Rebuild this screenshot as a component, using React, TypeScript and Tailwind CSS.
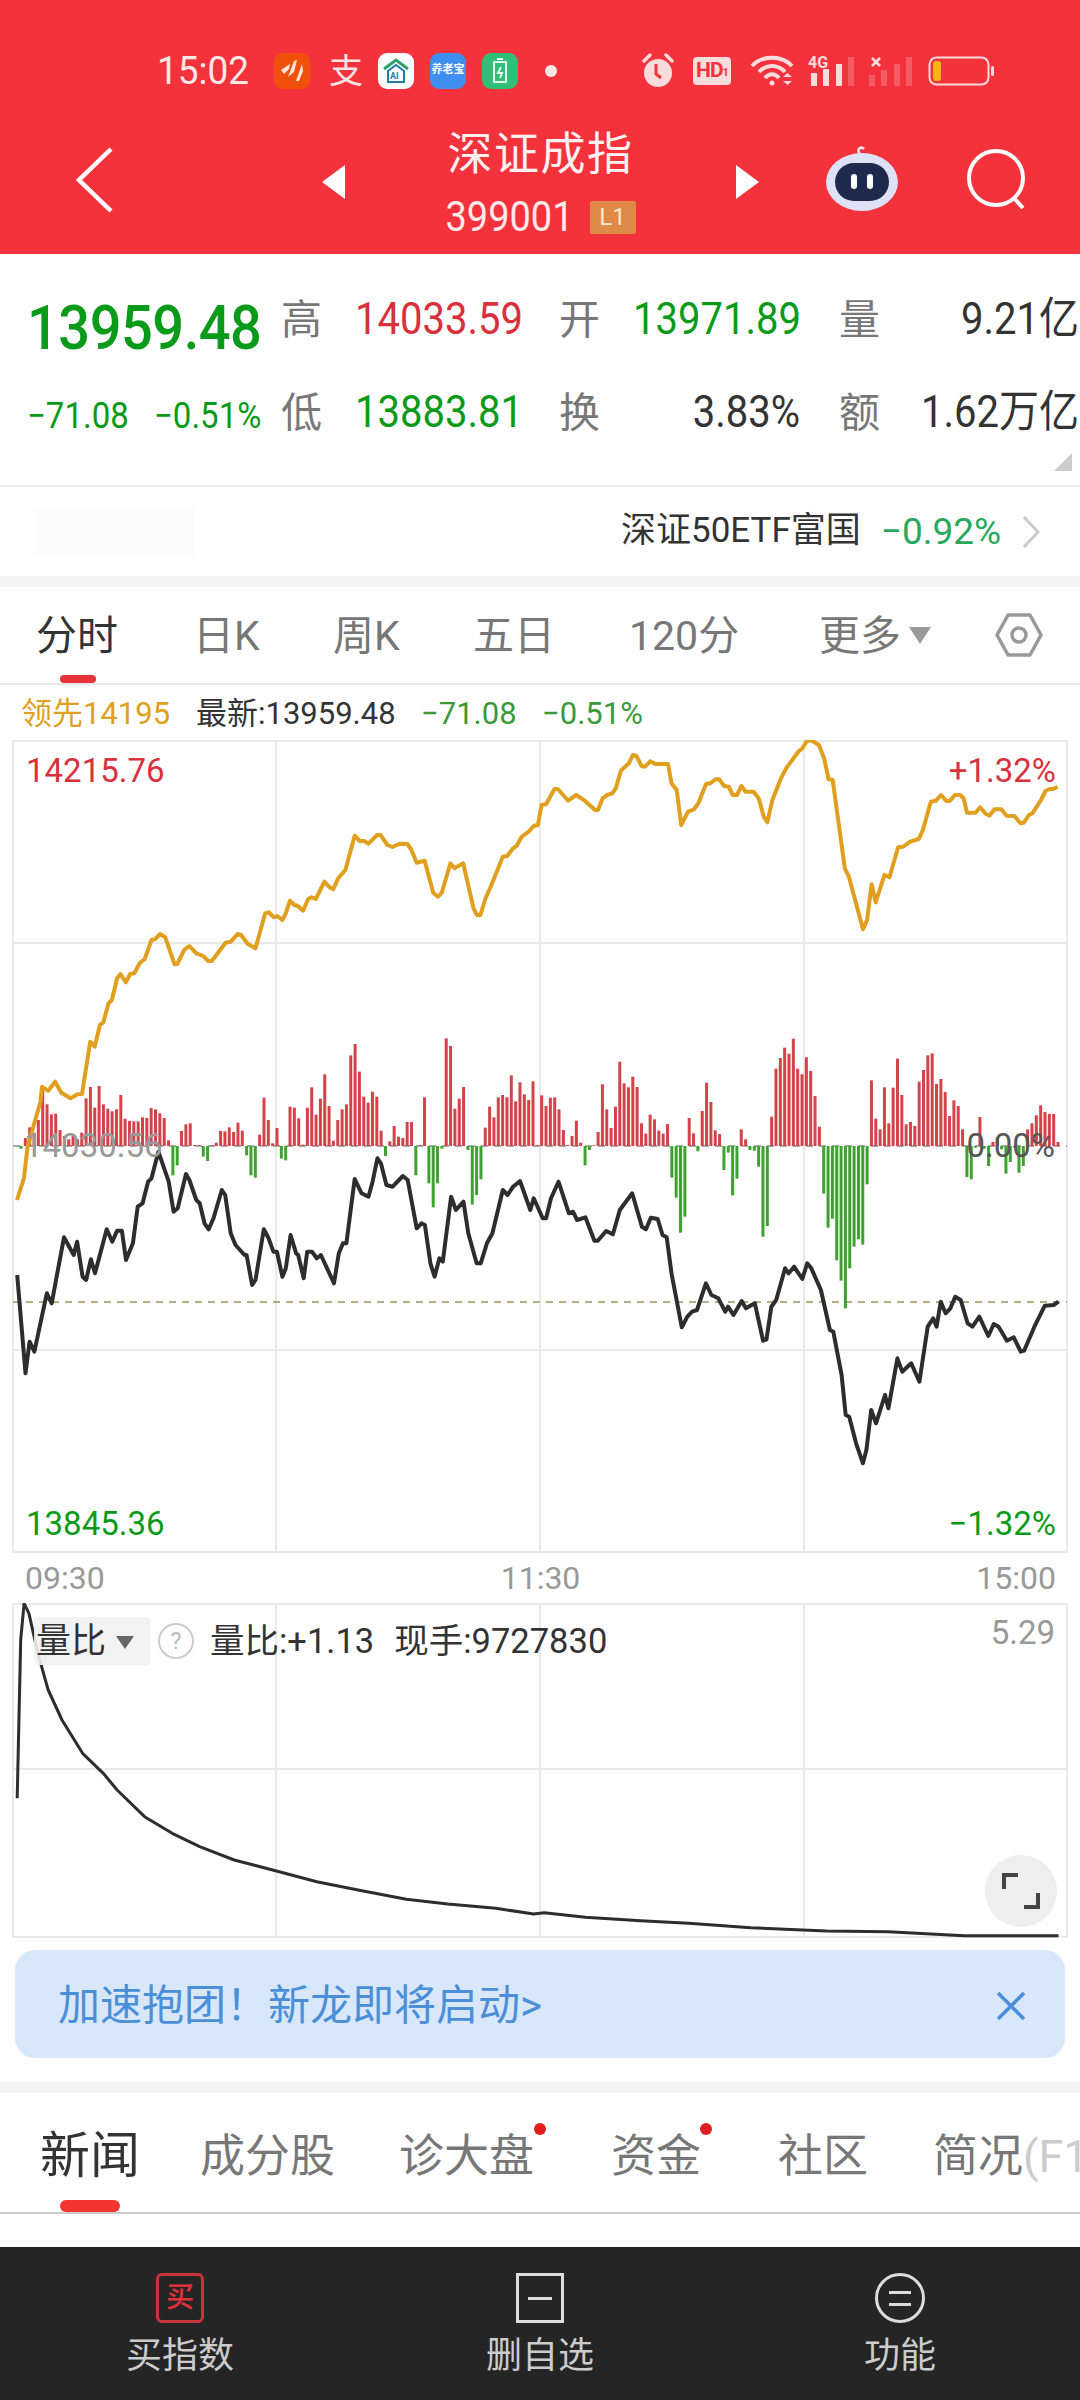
import React from 'react';

const FONT = "font-['Roboto','Noto_Sans_CJK_SC',sans-serif]";

// traced points, in zoomed crop coordinates
const goldLeft = [[118,1200],[122,1160],[140,1172],[160,1145],[178,1178],[205,1195],[225,1183],[238,1182],[262,1025],[275,1040],[290,975],[300,968],[315,910],[325,900],[340,835],[350,822],[365,847],[378,822],[390,820],[405,790],[420,778],[440,720],[450,718],[465,702],[480,712],[507,793],[515,792],[535,750],[550,738],[570,760],[590,768],[605,783],[615,783],[655,728],[670,725],[690,702],[700,705],[720,732],[742,745],[770,640],[780,637],[795,652],[805,648],[820,660],[830,640],[842,602],[855,615],[865,618],[880,632],[895,597],[905,592],[917,597],[942,545],[955,560],[968,568],[982,535],[1003,510],[1030,407],[1045,423],[1058,423],[1070,431],[1095,405],[1105,405],[1125,435],[1140,441],[1160,431],[1183,432],[1195,450],[1210,488],[1233,482],[1258,578],[1272,590],[1283,578],[1308,490],[1320,505],[1345,490],[1375,625],[1385,645],[1395,645],[1410,595],[1425,560],[1460,470],[1473,468],[1490,445],[1500,438],[1515,410],[1535,395],[1550,378],[1562,375]];
const goldRight = [[0,340],[5,315],[18,312],[42,267],[52,267],[82,302],[105,285],[130,302],[160,330],[168,330],[182,295],[195,285],[210,280],[220,265],[235,212],[258,190],[270,165],[280,168],[295,198],[305,200],[320,184],[335,192],[372,192],[382,250],[397,270],[410,375],[430,335],[447,328],[460,310],[482,252],[495,250],[510,238],[520,238],[535,258],[548,260],[560,285],[572,285],[585,258],[597,275],[620,275],[635,295],[650,350],[660,367],[675,300],[700,235],[715,205],[750,155],[762,145],[775,122],[790,122],[810,135],[825,175],[838,238],[850,240],[885,505],[897,530],[938,688],[950,660],[963,553],[975,607],[1000,525],[1015,532],[1040,442],[1055,440],[1075,425],[1100,417],[1112,390],[1135,305],[1150,302],[1165,285],[1180,303],[1190,303],[1205,285],[1220,285],[1230,295],[1240,338],[1265,338],[1278,322],[1295,342],[1305,347],[1320,328],[1340,328],[1355,347],[1378,348],[1395,370],[1405,368],[1420,345],[1430,340],[1455,300],[1468,273],[1480,267],[1490,267],[1503,260]];
const blackLine = [[25,525],[37,820],[43,725],[50,755],[68,580],[75,610],[93,412],[107,465],[112,425],[120,530],[125,540],[132,478],[138,520],[155,388],[163,425],[170,392],[177,392],[183,480],[193,430],[200,320],[207,310],[215,245],[220,235],[230,155],[245,245],[252,335],[258,325],[270,222],[275,240],[285,300],[290,310],[297,370],[303,388],[310,355],[322,270],[327,285],[335,400],[342,435],[355,465],[358,465],[366,555],[371,540],[383,388],[390,415],[397,455],[402,455],[410,530],[415,505],[422,405],[430,460],[433,465],[441,535],[446,455],[453,455],[460,475],[466,465],[485,550],[492,460],[498,430],[503,430],[515,237],[525,280],[535,290],[541,245],[548,175],[553,190],[561,255],[570,260],[585,228],[592,240],[605,385],[612,370],[617,375],[625,490],[631,530],[638,475],[643,485],[655,290],[662,330],[673,305],[680,400],[692,490],[698,490],[707,430],[715,400],[730,270],[737,285],[745,260],[755,243],[770,330],[775,295],[788,355],[793,355],[800,295],[811,245],[826,340],[832,335],[838,360],[850,352],[863,422],[868,422],[880,393],[890,403],[900,330],[918,280],[932,380],[938,388],[945,353],[955,357],[962,405],[968,412],[975,520],[990,682],[998,650],[1005,635],[1012,630],[1025,550],[1033,585],[1043,595],[1053,635],[1057,620],[1065,645],[1077,603],[1083,625],[1096,610],[1108,722],[1113,718],[1120,620],[1127,600],[1140,505],[1145,520],[1153,500],[1165,537],[1172,490],[1178,505],[1192,570],[1205,690],[1210,695],[1222,825],[1228,945],[1233,950],[1243,1030],[1253,1090],[1258,1050],[1265,930],[1272,970],[1285,885],[1290,925],[1303,775],[1310,815],[1323,790],[1335,845],[1347,680],[1355,655],[1360,680],[1366,605],[1373,640],[1380,625],[1387,590],[1395,600],[1405,670],[1412,680],[1422,650],[1435,708],[1443,672],[1450,680],[1462,722],[1472,712],[1482,755],[1487,752],[1502,680],[1517,617],[1530,615],[1537,605]];
const ratioLine = [[25,655],[30,180],[35,70],[42,100],[55,220],[70,330],[90,420],[120,520],[150,580],[170,630],[210,710],[250,760],[290,800],[340,840],[400,872],[460,905],[520,930],[590,958],[650,972],[720,985],[775,1002],[790,998],[850,1012],[930,1022],[1000,1030],[1090,1043],[1200,1053],[1290,1055],[1400,1067],[1537,1067]];
const bars = [-8,24,56,40,78,175,125,95,97,48,30,20,30,20,40,143,177,115,180,125,112,104,110,153,82,75,74,74,86,84,114,110,98,84,17,-88,-58,45,65,68,3,2,-32,-45,2,10,45,44,56,42,70,46,-28,-88,-95,34,145,78,8,54,-38,-43,118,115,83,4,115,176,94,142,215,120,16,78,110,125,272,306,223,148,130,
163,148,46,-30,14,60,28,24,72,72,-88,2,146,-112,-184,-112,-8,323,300,112,142,177,-12,-176,-147,-100,55,118,86,146,153,146,212,134,191,155,138,194,2,152,120,145,146,110,48,3,30,76,10,-58,-12,2,42,185,110,54,118,253,188,176,208,177,68,37,94,80,46,37,66,-95,-155,-260,-212,84,38,-16,105,190,132,47,
36,-72,-20,-148,-98,50,20,-12,-14,-62,-272,-240,88,232,264,295,277,322,232,215,266,225,150,58,-143,-245,-218,-343,-404,-487,-367,-302,-280,-296,-115,197,82,50,176,68,175,262,153,65,72,60,193,228,272,278,186,201,162,90,137,120,50,-93,-100,-5,87,-8,-60,12,25,-10,-83,-48,-5,-80,-60,50,68,92,122,102,96,96,12];

const pts = (list: number[][], sx: number, ox: number, oy: number) =>
  list.map(([x, y]) => `${(ox + x / sx).toFixed(1)},${(oy + y / 3).toFixed(1)}`).join(' ');

function Frame({ top, bottom, rows }: { top: number; bottom: number; rows: number[] }) {
  return (
    <g stroke="#e9e9e9" strokeWidth="2" fill="none">
      <rect x="13" y={top} width="1054" height={bottom - top} />
      <line x1="276" x2="276" y1={top} y2={bottom} />
      <line x1="540" x2="540" y1={top} y2={bottom} />
      <line x1="804" x2="804" y1={top} y2={bottom} />
      {rows.map((y) => <line key={y} x1="13" x2="1067" y1={y} y2={y} />)}
    </g>
  );
}

function MainChart() {
  return (
    <div className="relative h-[813px]">
      <svg className="block w-full h-full" viewBox="0 740 1080 813">
        <Frame top={741} bottom={1552} rows={[943, 1350]} />
        <line x1="13" x2="1067" y1="1146" y2="1146" stroke="#aaaaaa" strokeWidth="2" strokeDasharray="7 6" />
        <line x1="13" x2="1067" y1="1302" y2="1302" stroke="#b8ac84" strokeWidth="2" strokeDasharray="7 6" />
        {bars.map((v, i) => (
          <rect key={i} x={19.5 + i * 4.339} y={v > 0 ? 1146 - v / 3 : 1146} width="3" height={Math.abs(v) / 3} fill={v > 0 ? '#d5434a' : '#3fa230'} />
        ))}
        <polyline fill="none" stroke="#e09f1f" strokeWidth="4" strokeLinejoin="round" points={`17,1200 24,1178 27.5,1147 41,1100 ${pts(goldLeft, 2.904, 0, 700)} ${pts(goldRight, 2.904, 540, 700)}`} />
        <polyline fill="none" stroke="#2d2d2d" strokeWidth="4" strokeLinejoin="round" points={pts(blackLine, 1.452, 0, 1100)} />
      </svg>
      <span className="absolute left-[26px] top-[13px] text-[33px] leading-[36px] text-[#d8303c]">14215.76</span>
      <span className="absolute right-[24px] top-[13px] text-[33px] leading-[36px] text-[#d8303c]">+1.32%</span>
      <span className="absolute left-[24px] top-[388px] text-[33px] leading-[36px] text-[#999999]">14030.56</span>
      <span className="absolute right-[25px] top-[388px] text-[33px] leading-[36px] text-[#555555]">0.00%</span>
      <span className="absolute left-[26px] top-[766px] text-[33px] leading-[36px] text-[#0a9a1a]">13845.36</span>
      <span className="absolute right-[24px] top-[766px] text-[33px] leading-[36px] text-[#0a9a1a]">−1.32%</span>
    </div>
  );
}

function RatioChart() {
  return (
    <div className="relative h-[335px]">
      <svg className="block w-full h-full" viewBox="0 1603 1080 335">
        <Frame top={1604} bottom={1937} rows={[1769]} />
        <polyline fill="none" stroke="#2d2d2d" strokeWidth="3" strokeLinejoin="round" points={pts(ratioLine, 1.452, 0, 1580)} />
      </svg>
      <div className="absolute left-[34px] top-[11px] flex items-center gap-[10px]">
        <div className="flex items-center w-[116px] h-[48px] bg-[#f2f2f2]/90 rounded-[4px] pl-[2px] gap-[10px] text-[35px] text-[#333333] pt-[3px]">
          量比
          <span className="w-0 h-0 border-x-[9px] border-x-transparent border-t-[13px] border-t-[#666666]" />
        </div>
        <div className="flex items-center justify-center w-[36px] h-[36px] ml-[-2px] rounded-full border-2 border-[#cccccc] text-[24px] text-[#bbbbbb]">?</div>
        <span className="ml-[6px] pt-[2px] text-[34.500px] text-[#333333] whitespace-nowrap">量比:+1.13</span>
        <span className="ml-[10px] pt-[2px] text-[34.500px] text-[#333333] whitespace-nowrap">现手:9727830</span>
      </div>
      <span className="absolute right-[25px] top-[12px] text-[33px] leading-[36px] text-[#999999]">5.29</span>
      <div className="absolute left-[985px] top-[252px] flex items-center justify-center w-[72px] h-[72px] rounded-full bg-[#eeeeee]">
        <svg width="38" height="36" viewBox="0 0 38 36" fill="none" stroke="#444444" strokeWidth="4">
          <path d="M2 16V2H16" />
          <path d="M36 20V34H22" />
        </svg>
      </div>
    </div>
  );
}

function StatusIcons() {
  return (
    <div className="flex items-center">
      <svg width="32" height="36" viewBox="0 0 32 36">
        <path d="M2 8 8 2M30 8 24 2" stroke="#fbdcdc" strokeWidth="3.5" strokeLinecap="round" />
        <circle cx="16" cy="20" r="14" fill="#fbdcdc" />
        <path d="M14 11v10l5 4" stroke="#f3323c" strokeWidth="3" fill="none" />
      </svg>
      <span className="ml-[19px] flex items-center justify-center w-[38px] h-[28px] rounded-[4px] bg-[#fbdcdc] text-[21px] font-bold text-[#f3323c] tracking-[-1px]">
        HD<span className="text-[11px] mt-[6px]">1</span>
      </span>
      <svg className="ml-[19px]" width="44" height="32" viewBox="0 0 44 32" fill="none" stroke="#fbdcdc" strokeWidth="4">
        <path d="M2 11C12 0 32 0 42 11" />
        <path d="M9 17C16 9 28 9 35 17" />
        <path d="M15 23C19 18 25 18 29 23" />
        <circle cx="22" cy="28" r="2.5" fill="#fbdcdc" stroke="none" />
        <path d="M33 22h9l-4.500-4zM33 26h9l-4.500 4z" fill="#fbdcdc" stroke="none" />
      </svg>
      <svg className="ml-[14px]" width="46" height="32" viewBox="0 0 46 32">
        <rect x="3" y="18" width="6" height="13" fill="#fbdcdc" />
        <rect x="15" y="14" width="6" height="17" fill="#fbdcdc" />
        <rect x="28" y="9" width="6" height="22" fill="#fbdcdc" />
        <rect x="40" y="2" width="6" height="29" fill="#ffffff" fillOpacity="0.2" />
        <text x="0" y="13" fontSize="16" fontWeight="700" fill="#fbdcdc" fontFamily="Roboto">4G</text>
      </svg>
      <svg className="ml-[15px]" width="44" height="32" viewBox="0 0 44 32">
        <path d="M3 3 11 11M11 3 3 11" stroke="#fbdcdc" strokeWidth="2.500" />
        <rect x="0" y="20" width="6" height="11" fill="#ffffff" fillOpacity="0.2" />
        <rect x="12" y="15" width="6" height="16" fill="#ffffff" fillOpacity="0.2" />
        <rect x="25" y="9" width="6" height="22" fill="#ffffff" fillOpacity="0.2" />
        <rect x="37" y="2" width="6" height="29" fill="#ffffff" fillOpacity="0.2" />
      </svg>
      <svg className="ml-[15px]" width="67" height="30" viewBox="0 0 67 30">
        <rect x="1.500" y="1.500" width="59" height="27" rx="7" fill="none" stroke="#fbdcdc" strokeWidth="2" />
        <rect x="5" y="5" width="8" height="20" rx="3" fill="#fab315" />
        <rect x="63" y="10" width="3" height="10" rx="1.500" fill="#fbdcdc" />
      </svg>
    </div>
  );
}

function StatusBar() {
  return (
    <div className="flex items-center h-[35px] pl-[157px]">
      <span className="text-[37px] leading-[36px] text-[#fde8e8] w-[117px] scale-y-105 whitespace-nowrap">15:02</span>
      <div className="flex items-center justify-center w-[36px] h-[36px] rounded-[9px] bg-[#f0500a]">
        <svg width="28" height="28" viewBox="0 0 28 28" fill="#ffe6d8">
          <path d="M3 13 12 7 11 12 6 17zM10 20 16 4 19 3 16 15zM18 24 24 7 25 14 21 24z" />
        </svg>
      </div>
      <span className="w-[34px] ml-[19px] text-[34px] leading-[36px] text-[#fde4e4]">支</span>
      <div className="flex items-center justify-center w-[36px] h-[36px] ml-[15px] rounded-[9px] bg-white">
        <svg width="28" height="28" viewBox="0 0 28 28" fill="none">
          <path d="M2 12 14 3 26 12" stroke="#2f9f6a" strokeWidth="3" />
          <path d="M6 14V25H22V14L14 8z" stroke="#1f7fa8" strokeWidth="2" />
          <text x="8" y="22" fontSize="9" fontWeight="700" fill="#1f7fa8" fontFamily="Roboto">AI</text>
        </svg>
      </div>
      <div className="flex items-center justify-center w-[36px] h-[36px] ml-[16px] rounded-[9px] bg-[#3f8ff0] text-[11px] font-bold text-white whitespace-nowrap">养老宝</div>
      <div className="flex items-center justify-center w-[36px] h-[36px] ml-[16px] rounded-[9px] bg-[#2fbf77]">
        <svg width="16" height="26" viewBox="0 0 16 26" fill="none" stroke="#e9fff3" strokeWidth="2">
          <rect x="2" y="4" width="12" height="20" />
          <path d="M5 1h6" />
          <path d="M9 9 6 15h4l-2 5" />
        </svg>
      </div>
      <span className="w-[12px] h-[12px] ml-[27px] rounded-full bg-[#fde8e8]" />
      <div className="ml-[85px]"><StatusIcons /></div>
    </div>
  );
}

function NavBar() {
  return (
    <div className="flex items-start h-[166px] pl-[76px]">
      <svg className="mt-[59px]" width="38" height="66" viewBox="0 0 38 66" fill="none" stroke="#ffffff" strokeWidth="4.500">
        <path d="M35 2 3 33 35 64" />
      </svg>
      <span className="mt-[77px] ml-[208px] w-0 h-0 border-y-[17px] border-y-transparent border-r-[23px] border-r-white" />
      <div className="flex flex-col items-center w-[391px] pt-[42px]">
        <span className="text-[45px] leading-[50px] tracking-[1.500px] text-[#fdf0f0]">深证成指</span>
        <div className="flex items-center mt-[20px]">
          <span className="text-[38px] leading-[34px] text-[#fdeaea] scale-y-110">399001</span>
          <span className="flex items-center justify-center w-[46px] h-[33px] ml-[16px] rounded-[2px] bg-[#e08a48] text-[24px] text-[#fde8d0]">L1</span>
        </div>
      </div>
      <span className="mt-[77px] w-0 h-0 border-y-[17px] border-y-transparent border-l-[23px] border-l-white" />
      <svg className="mt-[58px] ml-[67px]" width="72" height="66" viewBox="0 0 72 66">
        <path d="M34 8C30 3 35 0 38 3" stroke="#e3e6f5" strokeWidth="2.500" fill="none" />
        <ellipse cx="36" cy="36" rx="36" ry="29" fill="#dfe2f6" />
        <rect x="9" y="17" width="54" height="38" rx="19" fill="#1d2a4d" />
        <rect x="25" y="28" width="6" height="15" rx="3" fill="#ffffff" />
        <rect x="41" y="28" width="6" height="15" rx="3" fill="#ffffff" />
      </svg>
      <svg className="mt-[61px] ml-[69px]" width="60" height="60" viewBox="0 0 60 60" fill="none" stroke="#ffffff" strokeWidth="4">
        <circle cx="29" cy="29" r="27" />
        <path d="M46 48 56 59" />
      </svg>
    </div>
  );
}

function Stat({ label, value, color, end }: { label: string; value: string; color: string; end?: boolean }) {
  return (
    <div className="flex items-center h-[93px]">
      <span className="text-[41px] text-[#777777] w-[41px] shrink-0 leading-[48px]">{label}</span>
      <span className={`ml-[33px] flex-1 text-[40px] leading-[48px] whitespace-nowrap scale-y-110 ${end ? 'text-right' : ''}`} style={{ color }}>{value}</span>
    </div>
  );
}

function Quote() {
  return (
    <div className="relative h-[231px] flex pt-[19px]">
      <div className="w-[281px] pl-[27px]">
        <div className="text-[56px] leading-[64px] font-medium text-[#0a9a1a] mt-[23px] tracking-[-0.500px] scale-y-110 origin-left">13959.48</div>
        <div className="flex mt-[36px] text-[33px] leading-[40px] text-[#0a9a1a] whitespace-nowrap scale-y-110">
          <span className="w-[127px]">−71.08</span>
          <span>−0.51%</span>
        </div>
      </div>
      <div className="w-[278px]">
        <Stat label="高" value="14033.59" color="#d8303c" />
        <Stat label="低" value="13883.81" color="#0a9a1a" />
      </div>
      <div className="w-[241px]">
        <Stat label="开" value="13971.89" color="#0a9a1a" end />
        <Stat label="换" value="3.83%" color="#333333" end />
      </div>
      <div className="w-[240px] ml-[39px]">
        <Stat label="量" value="9.21亿" color="#333333" end />
        <Stat label="额" value="1.62万亿" color="#333333" end />
      </div>
      <span className="absolute right-[8px] bottom-[14px] w-0 h-0 border-l-[18px] border-l-transparent border-b-[18px] border-b-[#cccccc]" />
    </div>
  );
}

function EtfRow() {
  return (
    <div className="flex items-center h-[91px] border-t-2 border-[#ececec] pl-[35px]">
      <div className="w-[160px] h-[48px] bg-[#fcfcfc]" />
      <span className="ml-[426px] text-[35px] text-[#333333] whitespace-nowrap">深证50ETF富国</span>
      <span className="ml-[20px] text-[37px] text-[#2aa860] whitespace-nowrap">−0.92%</span>
      <svg className="ml-[21px]" width="18" height="32" viewBox="0 0 18 32" fill="none" stroke="#cccccc" strokeWidth="3">
        <path d="M2 1 16 16 2 31" />
      </svg>
    </div>
  );
}

function PeriodTabs() {
  return (
    <div className="flex items-center h-[98px] border-b-2 border-[#e8e8e8]">
      <div className="relative h-full flex items-center ml-[36px] w-[157px] pt-[4px] text-[41px] text-[#333333]">
        分时
        <span className="absolute left-[24px] bottom-0 w-[36px] h-[8px] rounded-full bg-[#e83438]" />
      </div>
      <div className="flex items-center pt-[4px] text-[41px] text-[#777777] whitespace-nowrap">
        <span className="w-[140px]">日K</span>
        <span className="w-[140px]">周K</span>
        <span className="w-[156px]">五日</span>
        <span className="w-[190px]">120分</span>
        <span>更多</span>
      </div>
      <span className="ml-[8px] w-0 h-0 border-x-[11px] border-x-transparent border-t-[17px] border-t-[#999999]" />
      <svg className="ml-[64px]" width="48" height="44" viewBox="0 0 48 44" fill="none" stroke="#999999" strokeWidth="3.500">
        <path d="M13 2H35L46 22 35 42H13L2 22z" strokeLinejoin="round" />
        <circle cx="24" cy="22" r="7" />
      </svg>
    </div>
  );
}

function InfoLine() {
  return (
    <div className="flex items-center h-[55px] pl-[21px] pt-[4px] text-[31px] whitespace-nowrap">
      <span className="text-[#e0a020] w-[175px]">领先14195</span>
      <span className="text-[#333333] w-[225px]">最新:13959.48</span>
      <span className="text-[#3a9a35] w-[121px]">−71.08</span>
      <span className="text-[#3a9a35]">−0.51%</span>
    </div>
  );
}

function Banner() {
  return (
    <div className="flex items-center justify-between h-[108px] mx-[15px] mt-[12px] pl-[43px] pr-[39px] pt-[3px] rounded-[20px] bg-[#d8e7f9]">
      <span className="text-[42px] text-[#4a8fd8] whitespace-nowrap">加速抱团！新龙即将启动&gt;</span>
      <svg width="30" height="30" viewBox="0 0 30 30" fill="none" stroke="#4a8fd8" strokeWidth="3.500">
        <path d="M2 2 28 28M28 2 2 28" />
      </svg>
    </div>
  );
}

function NewsTabs() {
  return (
    <div className="relative flex items-center h-[121px] pt-[8px] border-b-2 border-[#cccccc] overflow-hidden whitespace-nowrap text-[45px] text-[#777777]">
      <div className="relative h-full shrink-0 flex items-center ml-[40px] w-[160px] text-[50px] text-[#333333]">
        新闻
        <span className="absolute left-[20px] bottom-0 w-[60px] h-[12px] rounded-full bg-[#f0362f]" />
      </div>
      <span className="shrink-0 w-[199px]">成分股</span>
      <span className="relative shrink-0 w-[212px]">诊大盘
        <span className="absolute left-[135px] top-[0px] w-[12px] h-[12px] rounded-full bg-[#e02020]" />
      </span>
      <span className="relative shrink-0 w-[167px]">资金
        <span className="absolute left-[89px] top-[0px] w-[12px] h-[12px] rounded-full bg-[#e02020]" />
      </span>
      <span className="shrink-0 w-[155px]">社区</span>
      <span className="shrink-0">简况<span className="text-[#cccccc]">(F1</span></span>
    </div>
  );
}

function BottomBar() {
  return (
    <div className="flex h-[153px] bg-[#252525] text-[36px] text-[#cccccc] whitespace-nowrap">
      <div className="flex flex-col items-center w-[360px] pt-[26px]">
        <div className="flex items-center justify-center w-[48px] h-[50px] rounded-[6px] border-[3px] border-[#c9333b] text-[28px] font-medium text-[#e5303c]">买</div>
        <span className="mt-[7px] leading-[52px]">买指数</span>
      </div>
      <div className="flex flex-col items-center w-[360px] pt-[26px]">
        <div className="flex items-center justify-center w-[48px] h-[50px] border-[3px] border-[#dddddd]">
          <span className="w-[24px] h-[3px] bg-[#dddddd]" />
        </div>
        <span className="mt-[7px] leading-[52px]">删自选</span>
      </div>
      <div className="flex flex-col items-center w-[360px] pt-[26px]">
        <div className="flex flex-col items-center justify-center gap-[9px] w-[50px] h-[50px] rounded-full border-[3px] border-[#dddddd]">
          <span className="w-[22px] h-[3px] bg-[#dddddd]" />
          <span className="w-[22px] h-[3px] bg-[#dddddd]" />
        </div>
        <span className="mt-[7px] leading-[52px]">功能</span>
      </div>
    </div>
  );
}

export default function App() {
  return (
    <div className={`w-[1080px] h-[2400px] bg-white overflow-hidden ${FONT}`}>
      <div className="h-[254px] pt-[53px] bg-[#f3323c]">
        <StatusBar />
        <NavBar />
      </div>
      <Quote />
      <EtfRow />
      <div className="h-[11px] bg-[#f4f4f4]" />
      <PeriodTabs />
      <InfoLine />
      <MainChart />
      <div className="flex justify-between items-center h-[50px] pl-[25px] pr-[24px] text-[32px] text-[#999999]">
        <span>09:30</span>
        <span>11:30</span>
        <span>15:00</span>
      </div>
      <RatioChart />
      <Banner />
      <div className="h-[24px]" />
      <div className="h-[11px] bg-[#f4f4f4]" />
      <NewsTabs />
      <div className="h-[33px]" />
      <BottomBar />
    </div>
  );
}
